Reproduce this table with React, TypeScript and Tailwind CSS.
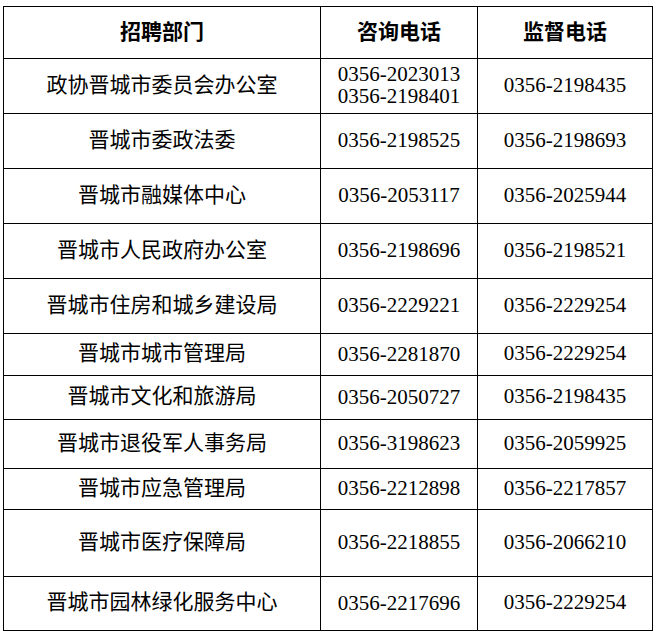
const rows: { dept: string; consult: string[]; supervise: string; h: string }[] = [
  { dept: '政协晋城市委员会办公室', consult: ['0356-2023013', '0356-2198401'], supervise: '0356-2198435', h: 'h-[55px]' },
  { dept: '晋城市委政法委', consult: ['0356-2198525'], supervise: '0356-2198693', h: 'h-[55px]' },
  { dept: '晋城市融媒体中心', consult: ['0356-2053117'], supervise: '0356-2025944', h: 'h-[55px]' },
  { dept: '晋城市人民政府办公室', consult: ['0356-2198696'], supervise: '0356-2198521', h: 'h-[55px]' },
  { dept: '晋城市住房和城乡建设局', consult: ['0356-2229221'], supervise: '0356-2229254', h: 'h-[55px]' },
  { dept: '晋城市城市管理局', consult: ['0356-2281870'], supervise: '0356-2229254', h: 'h-[42px]' },
  { dept: '晋城市文化和旅游局', consult: ['0356-2050727'], supervise: '0356-2198435', h: 'h-[44px]' },
  { dept: '晋城市退役军人事务局', consult: ['0356-3198623'], supervise: '0356-2059925', h: 'h-[49px]' },
  { dept: '晋城市应急管理局', consult: ['0356-2212898'], supervise: '0356-2217857', h: 'h-[41px]' },
  { dept: '晋城市医疗保障局', consult: ['0356-2218855'], supervise: '0356-2066210', h: 'h-[67px]' },
  { dept: '晋城市园林绿化服务中心', consult: ['0356-2217696'], supervise: '0356-2229254', h: 'h-[54px]' },
];

export default function App() {
  return (
    <div className="w-[657px] h-[637px] bg-white pt-[6px] pl-[3px] text-black text-[21px] leading-[21px] font-['Liberation_Serif','Noto_Sans_CJK_SC',serif]">
      <table className="border-collapse w-[649px] table-fixed">
        <colgroup>
          <col className="w-[317px]" />
          <col className="w-[157px]" />
          <col className="w-[175px]" />
        </colgroup>
        <thead>
          <tr className="h-[52px]">
            {['招聘部门', '咨询电话', '监督电话'].map((t) => (
              <th key={t} className="border border-black p-0 text-center align-middle font-bold">
                {t}
              </th>
            ))}
          </tr>
        </thead>
        <tbody>
          {rows.map((r) => (
            <tr key={r.dept} className={r.h}>
              <td className="border border-black p-0 pb-[2px] text-center align-middle">{r.dept}</td>
              <td className="border border-black p-0 pb-[2px] text-center align-middle leading-[22px]">
                {r.consult.map((c) => (
                  <div key={c}>{c}</div>
                ))}
              </td>
              <td className="border border-black p-0 pb-[2px] text-center align-middle">{r.supervise}</td>
            </tr>
          ))}
        </tbody>
      </table>
    </div>
  );
}
